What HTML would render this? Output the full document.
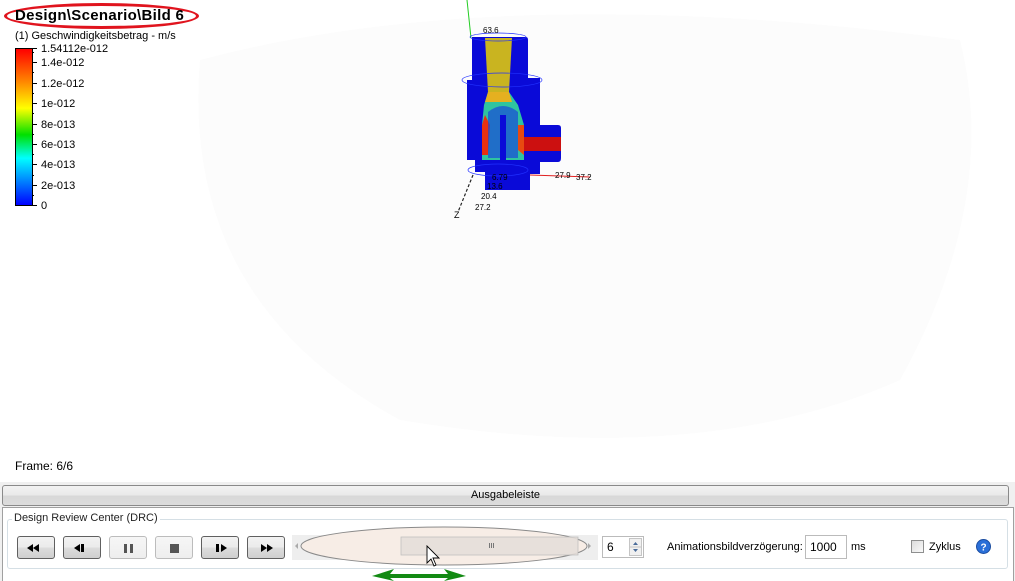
<!DOCTYPE html>
<html><head><meta charset="utf-8">
<style>
*{margin:0;padding:0;box-sizing:border-box}
body{width:1015px;height:581px;overflow:hidden;background:#f0f0f0;font-family:"Liberation Sans","DejaVu Sans",sans-serif;position:relative}
.abs{position:absolute}
.vp{left:0;top:0;width:1015px;height:482px;background:#fff}
.t{font-size:11px;color:#000;white-space:nowrap}
.btn{position:absolute;top:536px;width:38px;height:23px;border:1px solid #606060;border-radius:3px;background:linear-gradient(#f2f2f2,#ebebeb 50%,#dddddd 51%,#cfcfcf)}
.btn.dis{border-color:#bcbcbc;background:linear-gradient(#f6f6f6,#eeeeee)}
.btn svg{position:absolute;left:0;top:0}
</style></head><body>
<div class="abs vp"></div>
<svg class="abs" style="left:0;top:0" width="1015" height="482">
<path d="M200 60 Q500 -20 960 40 Q1000 200 900 380 Q700 470 400 420 Q180 300 200 60Z" fill="#fcfcfc"/>
</svg>

<div class="abs" style="left:4px;top:3px;width:195px;height:26px;border:3px solid #e0141e;border-radius:50%"></div>
<div class="abs" style="left:15px;top:7px;font-size:15px;font-weight:bold;letter-spacing:0.3px">Design\Scenario\Bild 6</div>
<div class="abs t" style="left:15px;top:30px">(1) Geschwindigkeitsbetrag - m/s</div>
<div class="abs" style="left:15px;top:48px;width:18px;height:158px;border:1px solid #000;background:linear-gradient(to bottom,#ff0000,#ff8000 20%,#ffff00 38%,#00e000 55%,#00ffff 70%,#0080ff 85%,#0000ff)"></div>
<svg class="abs" style="left:32px;top:48px" width="8" height="160">
<g stroke="#000" stroke-width="1">
<line x1="0" y1="0.5" x2="5" y2="0.5"/><line x1="0" y1="14.5" x2="5" y2="14.5"/><line x1="0" y1="35.5" x2="5" y2="35.5"/><line x1="0" y1="55.5" x2="5" y2="55.5"/><line x1="0" y1="76.5" x2="5" y2="76.5"/><line x1="0" y1="96.5" x2="5" y2="96.5"/><line x1="0" y1="116.5" x2="5" y2="116.5"/><line x1="0" y1="137.5" x2="5" y2="137.5"/><line x1="0" y1="157.5" x2="5" y2="157.5"/>
<line x1="0" y1="4.5" x2="2" y2="4.5"/><line x1="0" y1="24.5" x2="2" y2="24.5"/><line x1="0" y1="45.5" x2="2" y2="45.5"/><line x1="0" y1="65.5" x2="2" y2="65.5"/><line x1="0" y1="86.5" x2="2" y2="86.5"/><line x1="0" y1="106.5" x2="2" y2="106.5"/><line x1="0" y1="127.5" x2="2" y2="127.5"/><line x1="0" y1="147.5" x2="2" y2="147.5"/>
</g></svg>
<div class="abs t" style="left:41px;top:43px">1.54112e-012</div>
<div class="abs t" style="left:41px;top:57px">1.4e-012</div>
<div class="abs t" style="left:41px;top:78px">1.2e-012</div>
<div class="abs t" style="left:41px;top:98px">1e-012</div>
<div class="abs t" style="left:41px;top:119px">8e-013</div>
<div class="abs t" style="left:41px;top:139px">6e-013</div>
<div class="abs t" style="left:41px;top:159px">4e-013</div>
<div class="abs t" style="left:41px;top:180px">2e-013</div>
<div class="abs t" style="left:41px;top:200px">0</div>

<svg class="abs" style="left:440px;top:0" width="160" height="220">
<line x1="27" y1="0" x2="31" y2="38" stroke="#22cc22" stroke-width="1"/>
<path d="M32 37 L86 37 Q88 37 88 40 L88 78 L100 78 L100 125 L118 125 Q121 125 121 128 L121 158 Q121 162 118 162 L100 162 L100 174 L90 174 L90 190 L45 190 L45 172 L35 172 L35 160 L27 160 L27 80 L32 80 Z" fill="#0a0ad8"/>
<path d="M45 38 L72 38 L69 92 L48 92 Z" fill="#c9b420"/>
<path d="M48 92 L69 92 L78 105 L84 125 L84 160 L42 160 L42 125 L44 105 Z" fill="#2fc4a0"/>
<path d="M48 92 L69 92 L72 102 L45 102 Z" fill="#e5b020"/>
<path d="M42 125 L45 115 L50 125 L48 155 L42 155 Z" fill="#e83010"/>
<path d="M78 125 L84 125 L84 155 L78 150 Z" fill="#e84a10"/>
<path d="M48 112 Q63 100 78 112 L78 158 L48 158 Z" fill="#1a4ad8" opacity=".7"/>
<rect x="60" y="115" width="6" height="45" fill="#0a0ad8"/>
<rect x="84" y="137" width="37" height="14" fill="#cc1010"/>
<g fill="none" stroke="#2030ff" stroke-width="0.7">
<ellipse cx="58" cy="37" rx="28" ry="4"/><ellipse cx="62" cy="80" rx="40" ry="7"/><ellipse cx="58" cy="170" rx="30" ry="6"/>
</g>
<line x1="33" y1="175" x2="18" y2="212" stroke="#222" stroke-width="1.2" stroke-dasharray="3,2"/>
<line x1="90" y1="175" x2="150" y2="177" stroke="#e02020" stroke-width="1"/>
<g font-size="8" font-family="Liberation Sans,sans-serif" fill="#000">
<text x="43" y="33">63.6</text><text x="52" y="180">6.79</text><text x="47" y="189">13.6</text><text x="41" y="199">20.4</text><text x="35" y="210">27.2</text><text x="115" y="178">27.9</text><text x="136" y="180">37.2</text><text x="14" y="218" font-size="9">Z</text>
</g></svg>

<div class="abs" style="left:15px;top:459px;font-size:12px">Frame: 6/6</div>

<div class="abs" style="left:2px;top:485px;width:1007px;height:21px;border:1px solid #8a8a8a;border-radius:3px;background:linear-gradient(#f3f3f3,#e9e9e9 50%,#d8d8d8 51%,#dcdcdc);font-size:11px;text-align:center;line-height:19px">Ausgabeleiste</div>
<div class="abs" style="left:2px;top:507px;width:1012px;height:74px;border-left:1px solid #a0a0a0;border-top:1px solid #a0a0a0;border-right:1px solid #a0a0a0;background:#fff"></div>
<div class="abs" style="left:7px;top:519px;width:1001px;height:50px;border:1px solid #d5dfe5;border-radius:3px"></div>
<div class="abs" style="left:12px;top:512px;background:#fff;padding:0 2px;font-size:11px;color:#222">Design Review Center (DRC)</div>

<div class="btn" style="left:17px"><svg width="38" height="23"><path d="M15 7v8l-6-4zM21 7v8l-6-4z" fill="#000"/></svg></div>
<div class="btn" style="left:63px"><svg width="38" height="23"><path d="M16 7v8l-6-4z" fill="#000"/><rect x="17" y="7" width="3" height="8" fill="#000"/></svg></div>
<div class="btn dis" style="left:109px"><svg width="38" height="23"><rect x="14" y="7" width="3" height="9" fill="#555"/><rect x="20" y="7" width="3" height="9" fill="#555"/></svg></div>
<div class="btn dis" style="left:155px"><svg width="38" height="23"><rect x="14" y="7" width="9" height="9" fill="#555"/></svg></div>
<div class="btn" style="left:201px"><svg width="38" height="23"><rect x="14" y="7" width="3" height="8" fill="#000"/><path d="M19 7v8l6-4z" fill="#000"/></svg></div>
<div class="btn" style="left:247px"><svg width="38" height="23"><path d="M13 7v8l6-4zM19 7v8l6-4z" fill="#000"/></svg></div>

<div class="abs" style="left:292px;top:535px;width:306px;height:25px;background:#eeeeee"></div>
<svg class="abs" style="left:290px;top:524px" width="312" height="50">
<ellipse cx="154" cy="22" rx="143" ry="19" fill="#f7ede6" stroke="#8a8a8a" stroke-width="1"/>
<rect x="111" y="13" width="177" height="18" fill="#e6dfda" stroke="#bbb" stroke-width="0.8" opacity=".9"/>
<path d="M199.5 19v5M201.5 19v5M203.5 19v5" stroke="#777"/>
<path d="M8 19l-3 3 3 3z" fill="#aaa"/><path d="M298 19l3 3-3 3z" fill="#aaa"/>
<path d="M137 22 L137 39 L141 35 L144 42 L146 41 L143 34 L149 34 Z" fill="#fff" stroke="#000" stroke-width="0.9"/>
</svg>
<svg class="abs" style="left:370px;top:567px" width="100" height="14">
<path d="M2 9 L24 2 L20 7 L78 7 L74 2 L96 9 L74 14 L78 11 L20 11 L24 14 Z" fill="#138a13"/>
</svg>

<div class="abs" style="left:602px;top:536px;width:42px;height:22px;border:1px solid #bbb;background:#fff;font-size:12px;line-height:20px;padding-left:4px">6</div>
<div class="abs" style="left:629px;top:538px;width:13px;height:18px;border:1px solid #c5c5c5;background:#f0f0f0"></div>
<svg class="abs" style="left:629px;top:538px" width="13" height="18"><path d="M4 7l2.5-3 2.5 3z" fill="#4a6c9a"/><path d="M4 11l2.5 3 2.5-3z" fill="#4a6c9a"/><line x1="0" y1="9" x2="13" y2="9" stroke="#c5c5c5"/></svg>

<div class="abs t" style="left:667px;top:541px">Animationsbildverzögerung:</div>
<div class="abs" style="left:805px;top:535px;width:42px;height:24px;border:1px solid #bbb;background:#fff;font-size:12px;line-height:23px;padding-left:4px">1000</div>
<div class="abs t" style="left:851px;top:541px">ms</div>
<div class="abs" style="left:911px;top:540px;width:13px;height:13px;border:1px solid #8e8f8f;background:linear-gradient(135deg,#dcdcdc,#fafafa)"></div>
<div class="abs t" style="left:929px;top:541px">Zyklus</div>
<svg class="abs" style="left:976px;top:539px" width="15" height="15"><circle cx="7.5" cy="7.5" r="7" fill="#2a6fd8" stroke="#1a4ca0"/><text x="7.5" y="11.5" font-size="10" font-weight="bold" fill="#fff" text-anchor="middle" font-family="Liberation Sans,sans-serif">?</text></svg>
</body></html>
